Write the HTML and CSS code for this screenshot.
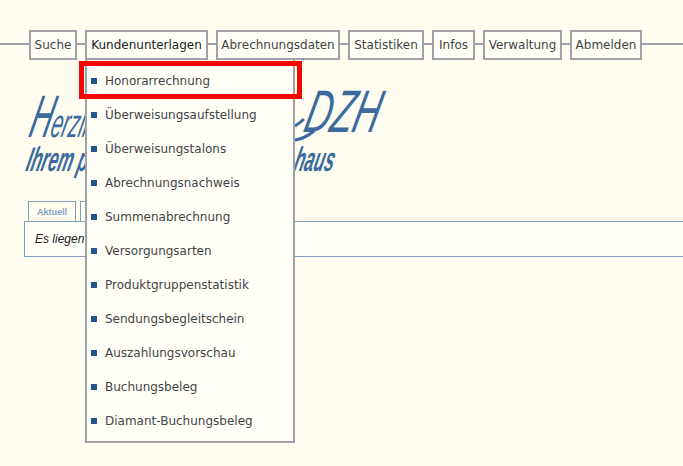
FILE: index.html
```html
<!DOCTYPE html>
<html>
<head>
<title>Kundenunterlagen</title>
<link rel="stylesheet" href="styles.css">
</head>
<body>

<nav class="nav">
  <a class="nav-item nav-suche">Suche</a>
  <div class="nav-group">
    <a class="nav-item nav-kunden">Kundenunterlagen</a>
    <ul class="menu">
      <li class="menu-item menu-item-marked">Honorarrechnung</li>
      <li class="menu-item">Überweisungsaufstellung</li>
      <li class="menu-item">Überweisungstalons</li>
      <li class="menu-item">Abrechnungsnachweis</li>
      <li class="menu-item">Summenabrechnung</li>
      <li class="menu-item">Versorgungsarten</li>
      <li class="menu-item">Produktgruppenstatistik</li>
      <li class="menu-item">Sendungsbegleitschein</li>
      <li class="menu-item">Auszahlungsvorschau</li>
      <li class="menu-item">Buchungsbeleg</li>
      <li class="menu-item">Diamant-Buchungsbeleg</li>
    </ul>
  </div>
  <a class="nav-item nav-abrechnung">Abrechnungsdaten</a>
  <a class="nav-item nav-statistik">Statistiken</a>
  <a class="nav-item nav-infos">Infos</a>
  <a class="nav-item nav-verwaltung">Verwaltung</a>
  <a class="nav-item nav-abmelden">Abmelden</a>
</nav>

<div class="greeting">
  <div class="greeting-line greeting-top">
    <span class="hand hand-big-first">Herzli</span>
    <span class="hand hand-caps">DZH</span>
  </div>
  <div class="greeting-line greeting-bottom">
    <span class="hand">Ihrem p</span>
    <span class="hand hand-end">haus</span>
  </div>
  <svg class="flourish" width="40" height="40" viewBox="0 0 40 40">
    <path d="M0 38 C7 37 13 34 19 29" />
    <path d="M0 24 C3 22 6 20 9 17" />
  </svg>
</div>

<div class="tabs">
  <div class="tab">Aktuell</div>
  <div class="tab"></div>
</div>
<div class="panel">Es liegen</div>

</body>
</html>
```

FILE: styles.css
```css
body {
  margin: 0;
  height: 466px;
  overflow: hidden;
  background-color: #fffdf0;
  font-family: "DejaVu Sans", sans-serif;
  color: #444;
}

.nav {
  display: flex;
  gap: 8px;
  height: 30px;
  margin-top: 30px;
  padding-left: 29px;
  background: linear-gradient(#a0a0a8, #a0a0a8) 0 13px / 100% 2px no-repeat;
}

.nav-group {
  position: relative;
}

.nav-item {
  display: block;
  box-sizing: border-box;
  height: 30px;
  border: 2px solid #a0a0a8;
  background-color: #fffff8;
  font-size: 12px;
  line-height: 26px;
  text-align: center;
  white-space: nowrap;
}

.nav-suche { width: 48px; }
.nav-kunden { width: 123px; color: #222; }
.nav-abrechnung { width: 124px; }
.nav-statistik { width: 76px; }
.nav-infos { width: 43px; }
.nav-verwaltung { width: 79px; }
.nav-abmelden { width: 72px; }

.menu {
  position: absolute;
  top: 30px;
  left: 0;
  z-index: 2;
  box-sizing: border-box;
  width: 210px;
  height: 383px;
  margin: 0;
  padding: 3px 0 0;
  list-style: none;
  border: 2px solid #a0a0a8;
  border-top: none;
  background-color: #fffff8;
}

.menu-item {
  position: relative;
  height: 34px;
  padding-left: 18px;
  font-size: 12px;
  line-height: 36px;
  white-space: nowrap;
}

.menu-item::before {
  content: "";
  position: absolute;
  left: 4px;
  top: 15px;
  width: 6px;
  height: 6px;
  background-color: #24548c;
}

.menu-item-marked::after {
  content: "";
  position: absolute;
  left: -8px;
  top: -2px;
  width: 213px;
  height: 28px;
  border: 5px solid #f00;
}

.greeting {
  position: relative;
  width: 350px;
  height: 90px;
  margin: 30px 0 0 24px;
  color: #3a6a9e;
  font-family: "Liberation Sans", sans-serif;
  font-style: italic;
}

.greeting-line {
  display: flex;
  justify-content: space-between;
  align-items: baseline;
}

.greeting-top {
  height: 54px;
  font-size: 40px;
  line-height: 54px;
}

.greeting-bottom {
  width: 307px;
  height: 30px;
  font-size: 34px;
  line-height: 30px;
  font-weight: bold;
}

.hand {
  display: inline-block;
  transform: skewX(-14deg) scaleX(0.5);
  transform-origin: left bottom;
}

.hand-big-first::first-letter {
  font-size: 60px;
}

.hand-end {
  transform-origin: right bottom;
}

.hand-caps {
  font-size: 60px;
  transform: translateY(-5px) skewX(-14deg) scaleX(0.6);
  transform-origin: right bottom;
}

.flourish {
  position: absolute;
  left: 271px;
  top: 12px;
  fill: none;
  stroke: #3a6a9e;
  stroke-width: 3;
}

.tabs {
  display: flex;
  gap: 4px;
  margin: 21px 0 0 28px;
}

.tab {
  box-sizing: border-box;
  width: 48px;
  height: 20px;
  border: 1px solid #7f9fbf;
  border-bottom: none;
  font-family: "Liberation Sans", sans-serif;
  font-size: 9px;
  font-weight: bold;
  line-height: 20px;
  text-align: center;
  color: #7f9fc8;
}

.panel {
  box-sizing: border-box;
  height: 36px;
  margin-left: 24px;
  padding-left: 10px;
  border: 1px solid #7f9fbf;
  border-right: none;
  background-color: #fffff8;
  font-family: "Liberation Sans", sans-serif;
  font-size: 12px;
  font-style: italic;
  line-height: 34px;
  color: #222;
}
```
